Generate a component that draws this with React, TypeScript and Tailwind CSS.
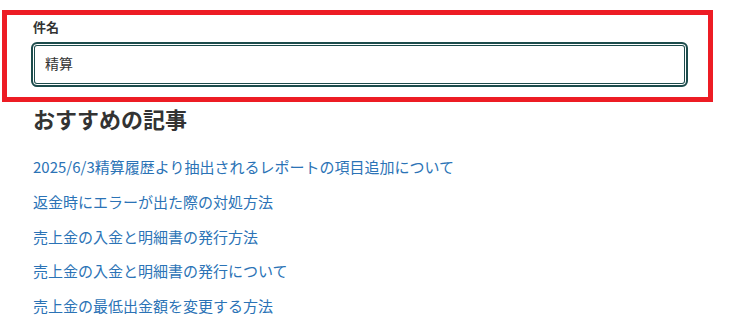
import React from "react";

const articles = [
  "2025/6/3精算履歴より抽出されるレポートの項目追加について",
  "返金時にエラーが出た際の対処方法",
  "売上金の入金と明細書の発行方法",
  "売上金の入金と明細書の発行について",
  "売上金の最低出金額を変更する方法",
];

export default function App() {
  return (
    <div
      className="w-[748px] h-[322px] bg-white overflow-hidden text-[#333333]"
      style={{ fontFamily: '"Noto Sans CJK JP", "Noto Sans", sans-serif' }}
    >
      {/* Highlighted field */}
      <div className="mt-[10px] ml-[2px] w-[711px] border-[5px] border-[#ed1c24] pt-[2px] pb-[10px] pl-[24px] pr-[20px]">
        <label className="block ml-[2px] mb-[5px] text-[13px] leading-[20px] font-bold">件名</label>
        <input
          type="text"
          defaultValue="精算"
          className="block w-full h-[45px] rounded-[6px] border-2 border-[#1d4c4c] shadow-[inset_0_0_0_1px_#ffffff,inset_0_0_0_2px_#1d4c4c] pl-[12px] pb-[4px] text-[14px] text-[#333333] outline-none"
        />
      </div>

      {/* Recommended articles */}
      <div className="pl-[33px]">
        <h2 className="mt-[1px] text-[22px] leading-[30px] font-bold">おすすめの記事</h2>
        <ul className="mt-[24px] flex flex-col gap-[14.75px] text-[15px]">
          {articles.map((a) => (
            <li key={a} className="leading-[20px]">
              <a href="#" className="leading-[20px] text-[#2b73b6]">
                {a}
              </a>
            </li>
          ))}
        </ul>
      </div>
    </div>
  );
}
